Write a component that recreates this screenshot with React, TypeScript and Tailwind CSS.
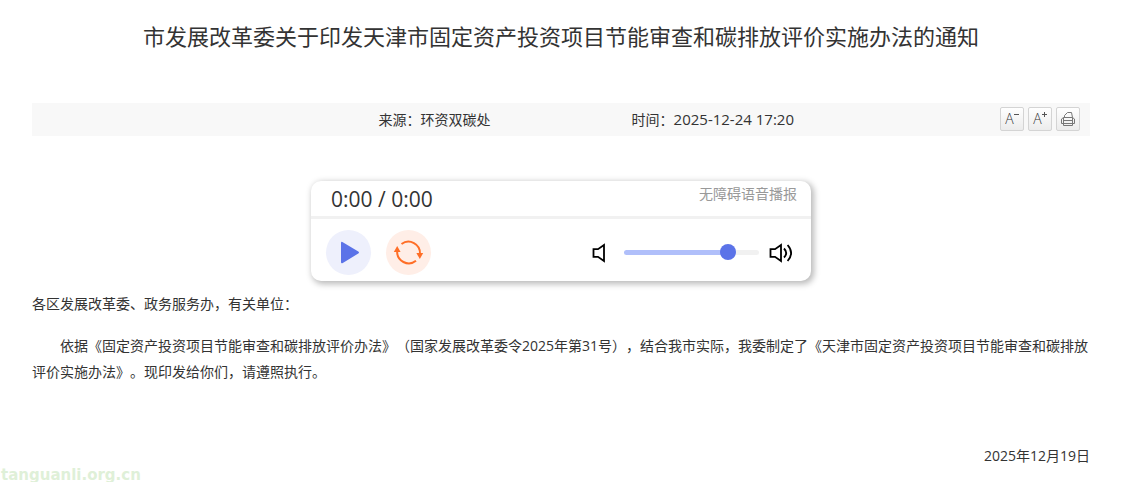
import { useState } from "react";

const article = {
  title: "市发展改革委关于印发天津市固定资产投资项目节能审查和碳排放评价实施办法的通知",
  source: "环资双碳处",
  time: "2025-12-24 17:20",
  date: "2025年12月19日",
};

const toolClass =
  "flex size-6 items-center justify-center rounded-xs border border-[#d4d4d4] bg-linear-to-b from-white to-[#ececec] font-light text-[#333]";

const SignIcon = ({ plus = false }: { plus?: boolean }) => (
  <svg viewBox="0 0 5 5" className="mb-2 size-[5px]" stroke="#555" shapeRendering="crispEdges">
    <path d="M0 2.5h5" />
    {plus && <path d="M2.5 0v5" />}
  </svg>
);

const PrintIcon = () => (
  <svg viewBox="0 0 14 14" className="size-3.5" fill="none" stroke="#777">
    <path d="M3.5 5.5V3.5L6.5.5h4l1 5" />
    <path d="M2.5 5.5h9l2 1.5v4.5H.5V7z" />
    <path d="M2.5 5.5v8h9v-8M2.5 8.5h9M2.5 11.5h9" />
  </svg>
);

const PlayIcon = () => (
  <svg viewBox="0 0 45 45" className="size-full" fill="#5b73e8">
    <path d="M15 13.2q0-2 1.8-1L32.3 21.5q1.4 1 0 2L16.8 32.9q-1.8 1-1.8-1z" />
  </svg>
);

const ReplayIcon = () => (
  <svg viewBox="0 0 45 45" className="size-full" fill="none" stroke="#ff6e26" strokeWidth="2">
    <path d="M15.5 14A11.6 11.6 0 0 1 34 24" />
    <path d="M30 30.8A11.6 11.6 0 0 1 11.2 21" />
    <path d="M30.4 23h6.8L33.8 29z" fill="#ff6e26" stroke="none" />
    <path d="M7.8 22h6.8L11.2 16z" fill="#ff6e26" stroke="none" />
  </svg>
);

const SpeakerIcon = ({ loud = false }: { loud?: boolean }) => (
  <svg viewBox="0 0 24 20" className="mt-0.5 h-5 w-6 shrink-0" fill="none" stroke="black" strokeWidth="1.8">
    <path d="M1.5 6.2H6L12 2v16l-6-4.2H1.5z" />
    {loud && (
      <>
        <path d="M15 5.5q4.4 4.5 0 9" />
        <path d="M18.6 2q7 8 0 16" />
      </>
    )}
  </svg>
);

const Player = () => {
  const [volume, setVolume] = useState(81);
  return (
    <div className="mx-auto w-full max-w-[500px] rounded-[10px] bg-white shadow-[2px_2px_6px_1px_rgba(0,0,0,0.28)]">
      <div className="flex h-[38px] justify-between border-b-3 border-[#f1f1f1] pr-3.5 pl-5">
        <span className="text-[21px] leading-9">0:00 / 0:00</span>
        <span className="leading-[26px] text-[#999]">无障碍语音播报</span>
      </div>
      <div className="flex h-[62px] items-center gap-[15px] pt-1 pr-[18px] pl-[15px]">
        <button aria-label="播放" className="size-[45px] rounded-full bg-[#eef0fc]">
          <PlayIcon />
        </button>
        <button aria-label="重播" className="size-[45px] rounded-full bg-[#ffeee7]">
          <ReplayIcon />
        </button>
        <div className="ml-auto flex items-center gap-2">
          <SpeakerIcon />
          <input
            type="range"
            aria-label="音量"
            value={volume}
            onChange={(e) => setVolume(Number(e.target.value))}
            style={{
              backgroundImage: `linear-gradient(to right, #b0bffa ${volume}%, #f1f1f1 ${volume}%)`,
            }}
            className="mr-0.5 h-[5px] w-[135px] appearance-none rounded-sm [&::-webkit-slider-thumb]:size-4 [&::-webkit-slider-thumb]:appearance-none [&::-webkit-slider-thumb]:rounded-full [&::-webkit-slider-thumb]:bg-[#5b73e8]"
          />
          <SpeakerIcon loud />
        </div>
      </div>
    </div>
  );
};

export default function App() {
  return (
    <main className="relative bg-white pr-[38px] pb-[13px] pl-8 font-['Open_Sans','Noto_Sans_CJK_SC',sans-serif] text-sm text-[#333] [text-spacing-trim:space-all]">
      <h1 className="pt-5 text-center text-[22px] leading-8">{article.title}</h1>
      <div className="mt-[51px] flex h-[33px] items-center bg-[#f8f8f8] pr-2.5">
        <div className="flex flex-1 justify-end pr-[141px]">
          <span>来源：{article.source}</span>
        </div>
        <span>
          时间：<time className="text-[15px]">{article.time}</time>
        </span>
        <div className="flex w-[286px] justify-end gap-1 pb-0.5">
          <button aria-label="缩小字体" className={toolClass}>
            A<SignIcon />
          </button>
          <button aria-label="放大字体" className={toolClass}>
            A<SignIcon plus />
          </button>
          <button aria-label="打印" className={toolClass}>
            <PrintIcon />
          </button>
        </div>
      </div>
      <div className="pt-[45px] pb-2.5">
        <Player />
      </div>
      <article className="flex flex-col gap-4 leading-[26px]">
        <p>各区发展改革委、政务服务办，有关单位：</p>
        <p className="indent-7">
          依据《固定资产投资项目节能审查和碳排放评价办法》（国家发展改革委令2025年第31号），结合我市实际，我委制定了《天津市固定资产投资项目节能审查和碳排放评价实施办法》。现印发给你们，请遵照执行。
        </p>
        <p className="mt-[42px] text-right">{article.date}</p>
      </article>
      <span className="absolute bottom-0 left-0 pl-px font-['DejaVu_Sans',sans-serif] text-[15px] leading-[14px] font-bold text-[#dff0d8]">
        tanguanli.org.cn
      </span>
    </main>
  );
}
